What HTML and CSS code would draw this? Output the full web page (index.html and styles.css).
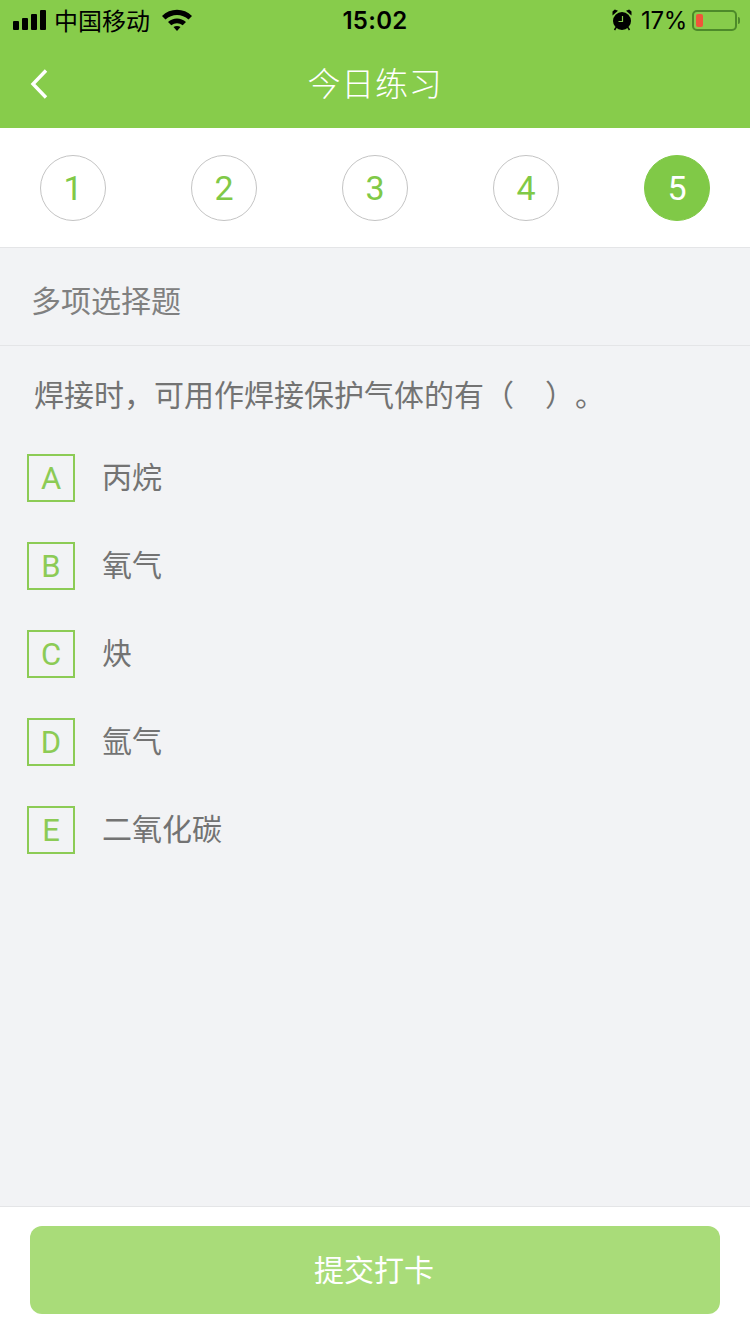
FILE: index.html
```html
<!DOCTYPE html>
<html lang="zh-CN">
<head>
    <meta charset="utf-8">
    <title>今日练习</title>
    <link rel="stylesheet" href="styles.css">
</head>
<body>
    <div class="page">
        <header class="top">
            <div class="status-bar">
                <div class="status-left">
                    <div class="signal">
                        <span class="bar bar-1"></span>
                        <span class="bar bar-2"></span>
                        <span class="bar bar-3"></span>
                        <span class="bar bar-4"></span>
                    </div>
                    <span class="carrier">中国移动</span>
                    <svg class="wifi" width="30" height="22" viewBox="0 0 30 22">
                        <path d="M0 7C8-1.500 22-1.500 30 7L26.500 10.500C20 4.500 10 4.500 3.500 10.500Z"/>
                        <path d="M6 13C11 8.300 19 8.300 24 13L20.700 16.300C17.300 13.400 12.700 13.400 9.300 16.300Z"/>
                        <path d="M11.500 18C13.500 16.500 16.500 16.500 18.500 18L15 22Z"/>
                    </svg>
                </div>
                <span class="clock">15:02</span>
                <div class="status-right">
                    <svg class="alarm" width="20" height="22" viewBox="0 0 20 22">
                        <circle cx="10" cy="12" r="9"/>
                        <path d="M.5 6.500L6 1.800L2.800 .5L.5 2.500Z"/>
                        <path d="M19.500 6.500L14 1.800L17.200 .5L19.500 2.500Z"/>
                        <path d="M4 18.500L2.500 21M16 18.500L17.500 21" stroke="#000" stroke-width="1.500"/>
                        <path d="M10.500 7V12.500H6.500" fill="none" stroke="#87cc4b" stroke-width="1.200"/>
                    </svg>
                    <span class="percent">17%</span>
                    <div class="battery">
                        <span class="battery-level"></span>
                    </div>
                    <span class="battery-cap"></span>
                </div>
            </div>
            <div class="nav-bar">
                <svg class="back" width="18" height="30" viewBox="0 0 18 30">
                    <path d="M16 1.500L3 15L16 28.500" fill="none" stroke="#fff" stroke-width="3.400"/>
                </svg>
                <h1 class="nav-title">今日练习</h1>
            </div>
        </header>

        <div class="steps">
            <span class="step">1</span>
            <span class="step">2</span>
            <span class="step">3</span>
            <span class="step">4</span>
            <span class="step step-active">5</span>
        </div>

        <main class="content">
            <div class="type-row">多项选择题</div>
            <p class="question">焊接时，可用作焊接保护气体的有（&nbsp;&nbsp;&nbsp;）。</p>
            <ul class="options">
                <li class="option"><span class="option-key">A</span><span class="option-text">丙烷</span></li>
                <li class="option"><span class="option-key">B</span><span class="option-text">氧气</span></li>
                <li class="option"><span class="option-key">C</span><span class="option-text">炔</span></li>
                <li class="option"><span class="option-key">D</span><span class="option-text">氩气</span></li>
                <li class="option"><span class="option-key">E</span><span class="option-text">二氧化碳</span></li>
            </ul>
        </main>

        <footer class="footer">
            <button class="submit">提交打卡</button>
        </footer>
    </div>
</body>
</html>
```

FILE: styles.css
```css
* {
    box-sizing: border-box;
}

body {
    margin: 0;
    padding: 0;
    font-family: 'Liberation Sans', 'Noto Sans CJK SC', sans-serif;
    background: #f2f3f5;
}

.page {
    display: flex;
    flex-direction: column;
    height: 1334px;
}

.top {
    height: 128px;
    background: #87cc4b;
}

.status-bar {
    display: flex;
    justify-content: space-between;
    align-items: center;
    position: relative;
    height: 40px;
    padding: 0 10px 0 13px;
    color: #000;
}

.status-left,
.status-right {
    display: flex;
    align-items: center;
}

.signal {
    display: flex;
    align-items: flex-end;
    gap: 3px;
    height: 20px;
}

.bar {
    width: 6px;
    background: #000;
    border-radius: 1px;
}

.bar-1 {
    height: 9px;
}

.bar-2 {
    height: 12px;
}

.bar-3 {
    height: 16px;
}

.bar-4 {
    height: 20px;
}

.carrier {
    margin-left: 8px;
    padding-bottom: 2px;
    font-size: 24px;
}

.wifi {
    margin-left: 12px;
}

.clock {
    position: absolute;
    left: 0;
    right: 0;
    text-align: center;
    font-family: 'Inter', sans-serif;
    font-size: 24px;
    font-weight: 600;
    letter-spacing: 0.3px;
}

.alarm {
    margin-right: 9px;
}

.percent {
    font-family: 'Inter', sans-serif;
    font-size: 24px;
    letter-spacing: -0.3px;
    margin-right: 5px;
}

.battery {
    width: 45px;
    height: 21px;
    padding: 2px;
    border: 2px solid #4d8a2a;
    border-radius: 5px;
}

.battery-level {
    display: block;
    width: 7px;
    height: 100%;
    background: #f0553a;
    border-radius: 2px;
}

.battery-cap {
    width: 2px;
    height: 7px;
    margin-left: 1px;
    background: #4d8a2a;
    border-radius: 0 2px 2px 0;
}

.nav-bar {
    display: flex;
    justify-content: center;
    align-items: center;
    position: relative;
    height: 88px;
}

.back {
    position: absolute;
    left: 30px;
    top: 29px;
}

.nav-title {
    margin: 0;
    padding-bottom: 4px;
    font-size: 33px;
    font-weight: 300;
    color: #fff;
    letter-spacing: 0.7px;
}

.steps {
    display: flex;
    justify-content: space-between;
    align-items: center;
    height: 120px;
    padding: 0 40px;
    background: #fff;
    border-bottom: 1px solid #e4e5e7;
}

.step {
    display: flex;
    justify-content: center;
    align-items: center;
    width: 66px;
    height: 66px;
    border: 1px solid #c4c4c4;
    border-radius: 50%;
    font-family: 'Roboto', sans-serif;
    font-size: 34px;
    color: #80c947;
}

.step-active {
    background: #80c947;
    border-color: #80c947;
    color: #fff;
}

.content {
    flex: 1;
}

.type-row {
    display: flex;
    align-items: center;
    height: 98px;
    padding: 4px 0 0 31px;
    border-bottom: 1px solid #e4e5e7;
    font-size: 30px;
    color: #808080;
}

.question {
    margin: 0;
    padding: 31px 0 0 34px;
    font-size: 30px;
    line-height: 38px;
    color: #737373;
    text-spacing-trim: space-all;
    word-spacing: 2px;
}

.options {
    list-style: none;
    margin: 0;
    padding: 39px 0 0 27px;
}

.option {
    display: flex;
    align-items: center;
    gap: 27px;
    height: 48px;
    margin-bottom: 40px;
    font-size: 30px;
    color: #737373;
}

.option-text {
    padding-bottom: 6px;
}

.option-key {
    display: flex;
    justify-content: center;
    align-items: center;
    width: 48px;
    height: 48px;
    border: 2px solid #8ccb55;
    font-family: 'Roboto', sans-serif;
    font-size: 31px;
    color: #8ccb55;
}

.footer {
    height: 128px;
    padding: 19px 30px 0;
    background: #fff;
    border-top: 1px solid #e4e5e7;
}

.submit {
    display: block;
    width: 100%;
    height: 88px;
    padding: 0 2px 4px 0;
    background: #a9dc79;
    color: #fff;
    border: none;
    border-radius: 12px;
    font-family: inherit;
    font-size: 30px;
    cursor: pointer;
}
```
